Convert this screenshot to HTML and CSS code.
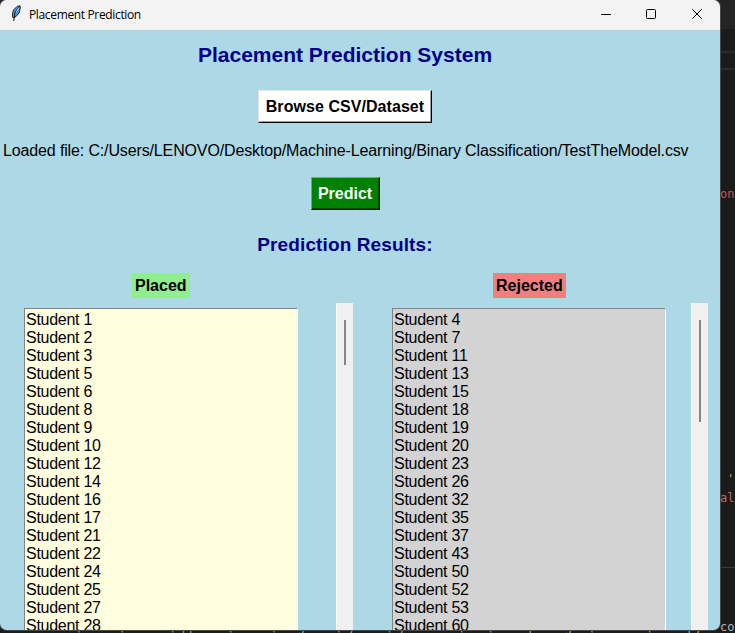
FILE: index.html
```html
<!DOCTYPE html>
<html lang="en">
<head>
<meta charset="utf-8">
<title>Placement Prediction</title>
<link rel="stylesheet" href="styles.css">
</head>
<body>
<div class="editor">
  <i class="rule rule-a"></i><i class="rule rule-b"></i><i class="rule rule-c"></i>
  <span class="code code-on">on</span>
  <span class="code code-quote">'</span>
  <span class="code code-al">al</span>
  <span class="code code-path">c:\Users\Lenovo\AppData\Local\Programs\Python\Python311\Lib\site-packages\sklearn\base.py</span>
  <span class="code code-con">con</span>
</div>
<main class="window">
  <header class="titlebar">
    <svg class="feather" width="11" height="17" viewBox="0 0 11 17">
      <path d="M2 13 1.3 9.500 2.500 5 6 1.500 9 .7 9.300 3 8 8 5 11.500Z" fill="#4d94dc" stroke="#20252c"/>
      <path d="M7.500 2.500 4 7.500 2.700 16" fill="none" stroke="#151b24"/>
      <path d="M7.600 3 5.500 7" fill="none" stroke="#b4dcfa"/>
    </svg>
    <span class="caption">Placement Prediction</span>
    <svg class="controls" width="120" height="30" viewBox="0 0 120 30" fill="none" stroke="#000">
      <path d="M1 14.500h10"/>
      <rect x="46.500" y="9.500" width="9" height="9" rx="1"/>
      <path d="M92.300 9.300l9.400 9.400m0-9.400l-9.400 9.400"/>
    </svg>
  </header>
  <section class="content">
    <h1>Placement Prediction System</h1>
    <button class="browse">Browse CSV/Dataset</button>
    <p class="file">Loaded file: C:/Users/LENOVO/Desktop/Machine-Learning/Binary Classification/TestTheModel.csv</p>
    <button class="predict">Predict</button>
    <h2>Prediction Results:</h2>
    <div class="results">
      <div class="group placed">
        <h3>Placed</h3>
        <div class="pane">
          <ul><li>Student 1<li>Student 2<li>Student 3<li>Student 5<li>Student 6<li>Student 8<li>Student 9<li>Student 10<li>Student 12<li>Student 14<li>Student 16<li>Student 17<li>Student 21<li>Student 22<li>Student 24<li>Student 25<li>Student 27<li>Student 28</ul>
          <div class="scroll"><div class="thumb"></div></div>
        </div>
      </div>
      <div class="group rejected">
        <h3>Rejected</h3>
        <div class="pane">
          <ul><li>Student 4<li>Student 7<li>Student 11<li>Student 13<li>Student 15<li>Student 18<li>Student 19<li>Student 20<li>Student 23<li>Student 26<li>Student 32<li>Student 35<li>Student 37<li>Student 43<li>Student 50<li>Student 52<li>Student 53<li>Student 60</ul>
          <div class="scroll"><div class="thumb"></div></div>
        </div>
      </div>
    </div>
  </section>
</main>
</body>
</html>
```
FILE: styles.css
```css
* { box-sizing: border-box; }
body { margin: 0; width: 735px; height: 633px; overflow: hidden; background: #1b1b1b; position: relative; font: 16px/18px "Liberation Sans", sans-serif; color: #000; }
h1, h2, h3, p, ul { margin: 0; padding: 0; }
.editor { position: absolute; inset: 0; overflow: hidden; background: linear-gradient(#242424 29px, #1b1b1b 29px); }
.rule { position: absolute; right: 0; width: 15px; height: 2px; background: #2b2b2b; }
.rule-a { top: 51px; }
.rule-b { top: 68px; }
.rule-c { top: 567px; height: 1px; background: #3a3a3a; }
.code { position: absolute; font: 12px/16px "DejaVu Sans Mono", monospace; white-space: pre; }
.code-on { left: 720px; top: 186px; color: #c15752; }
.code-quote { left: 727px; top: 471px; color: #ce9178; }
.code-al { left: 720px; top: 490px; color: #b5705f; }
.code-path { left: 59px; top: 619px; color: #a8a8a8; }
.code-con { left: 720px; top: 619px; color: #b8b8b8; }
.window { position: relative; width: 720px; height: 630px; overflow: hidden; border-radius: 7px; background: #add8e6; box-shadow: 0 0 0 1px #484848; }
.titlebar { display: flex; height: 30px; background: #f3f3f3; }
.feather { margin: 5px 0 0 11px; }
.caption { margin-left: 7px; font: 12px/29px "Open Sans", sans-serif; letter-spacing: -.35px; white-space: nowrap; }
.controls { margin-left: auto; }
.content { display: flex; flex-direction: column; align-items: center; width: 690px; }
h1, h2, h3, button { font-family: "Liberation Sans", sans-serif; font-weight: bold; white-space: nowrap; }
h1 { margin-top: 10px; height: 32px; font-size: 21px; line-height: 29px; color: #00008b; }
button { padding: 1px 0 0; height: 33px; border-style: solid; border-width: 1px; font-size: 16px; line-height: 30px; }
.browse { width: 174px; margin-top: 18px; background: #fff; border-color: #e3e3e3 #000 #000 #e3e3e3; box-shadow: inset -1px -1px #a0a0a0; letter-spacing: .06px; }
.file { align-self: flex-start; margin: 18px 0 0 3px; height: 20px; line-height: 20px; letter-spacing: -.137px; white-space: nowrap; }
.predict { width: 69px; margin-top: 16px; color: #fff; background: #008000; border-color: #67b367 #000 #000 #67b367; box-shadow: inset -1px -1px #005000; }
h2 { margin-top: 19px; height: 30px; font-size: 19px; line-height: 32px; letter-spacing: .12px; color: #00008b; }
.results { align-self: flex-start; display: flex; width: 708px; margin-top: 14px; }
.group { display: flex; flex-direction: column; padding-left: 24px; width: 353px; }
.rejected { padding-left: 39px; width: 355px; }
h3 { align-self: flex-start; height: 25px; padding: 0 3px; font-size: 16px; line-height: 25px; }
.placed h3 { margin-left: 108px; background: #90ee90; }
.rejected h3 { margin-left: 101px; background: #f08080; }
.pane { display: flex; justify-content: space-between; margin-top: 5px; height: 340px; }
ul { list-style: none; width: 274px; margin-top: 5px; padding: 2px 1px; border: 1px solid #838383; border-right-color: #fff; background: #ffffe0; letter-spacing: -.27px; }
.rejected ul { background: #d3d3d3; }
.scroll { width: 17px; padding: 17px 0 0 8px; background: #f0f0f0; border-left: 1px solid #fff; }
.thumb { width: 2px; height: 45px; margin-left: -1px; background: #858585; }
.rejected .thumb { height: 102px; }
```
